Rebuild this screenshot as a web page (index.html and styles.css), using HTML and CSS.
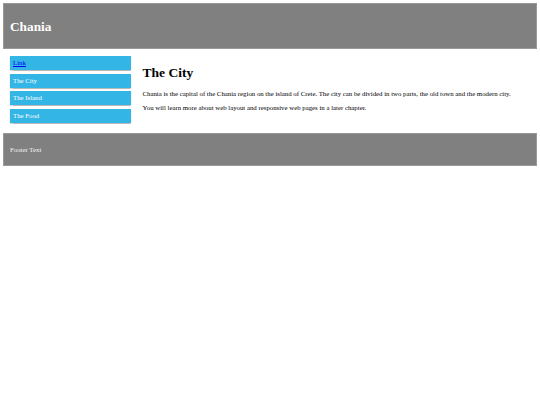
FILE: index.html
```html
<!DOCTYPE html>
<html>
<head>
<meta charset="utf-8">
<link rel="stylesheet" href="styles.css">
</head>
<body>
<div class="header">
  <h1 class="brand">Chania</h1>
</div>
<div class="row">
  <div class="menu-col">
    <ul class="menu">
      <li class="menu-item"><a class="menu-link" href="#">Link</a></li>
      <li class="menu-item">The City</li>
      <li class="menu-item">The Island</li>
      <li class="menu-item">The Food</li>
    </ul>
  </div>
  <div class="main-col">
    <h1 class="title">The City</h1>
    <p class="text">Chania is the capital of the Chania region on the island of Crete. The city can be divided in two parts, the old town and the modern city.</p>
    <p class="text">You will learn more about web layout and responsive web pages in a later chapter.</p>
  </div>
</div>
<div class="footer">
  <p class="footer-text">Footer Text</p>
</div>
</body>
</html>
```

FILE: styles.css
```css
* { box-sizing: border-box; }
html, body { background: #fff; }
body {
  margin: 3px;
  font-family: "Liberation Serif", "Times New Roman", serif;
  color: #000;
}
.header {
  background: #808080;
  color: #fff;
  height: 46px;
  padding: 1px 6px 0;
  display: flex;
  align-items: center;
  border: 1px solid #999;
}
.brand {
  margin: 0;
  font-size: 13.3px;
  font-weight: bold;
}
.row {
  display: flex;
  height: 84px;
}
.menu-col {
  width: 25%;
  padding: 7px 6px 7px 7px;
}
.menu {
  list-style: none;
  margin: 0;
  padding: 0;
  display: flex;
  flex-direction: column;
  gap: 3.5px;
}
.menu-item {
  background: #33b5e5;
  color: #fff;
  font-size: 6.8px;
  height: 14px;
  padding: 0 3px 1px;
  display: flex;
  align-items: center;
  box-shadow: 0 0.5px 1.5px rgba(0,0,0,0.12), 0 0.5px 1px rgba(0,0,0,0.24);
}
.menu-link { color: #0000ee; text-decoration: underline; }
.main-col {
  flex: 1;
  padding: 7px 6px;
}
.title {
  margin: 9px 0 9px;
  font-size: 13.5px;
  font-weight: bold;
}
.text {
  margin: 0 0 6px;
  font-size: 6.8px;
  line-height: 8px;
}
.footer {
  background: #808080;
  color: #f4f4f4;
  height: 33px;
  padding: 0 6px;
  display: flex;
  align-items: center;
  border: 1px solid #999;
}
.footer-text {
  margin: 0;
  font-size: 6.8px;
}
```
